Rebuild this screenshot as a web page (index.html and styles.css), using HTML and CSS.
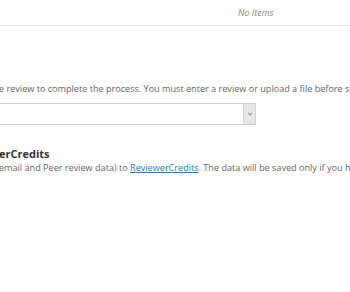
FILE: index.html
```html
<!DOCTYPE html>
<html>
<head>
<meta charset="utf-8">
<link rel="stylesheet" href="styles.css">
</head>
<body>
<div class="topbar">
  <span class="noitems">No Items</span>
</div>
<div class="content">
  <p class="instr">e review to complete the process. You must enter a review or upload a file before submitting.</p>
  <div class="select">
    <div class="select-field"></div>
    <div class="select-btn">
      <svg width="6" height="4" viewBox="0 0 6 4"><path d="M1 1 L3 3 L5 1" fill="none" stroke="#999" stroke-width="1.1"/></svg>
    </div>
  </div>
  <h3 class="heading">erCredits</h3>
  <p class="desc">email and Peer review data) to <a href="#" class="link">ReviewerCredits</a>. The data will be saved only if you have given consent.</p>
</div>
</body>
</html>
```

FILE: styles.css
```css
html, body {
  margin: 0;
  padding: 0;
  background: #fff;
  width: 350px;
  height: 292px;
  overflow: hidden;
}
body {
  font-family: "Open Sans", "Noto Sans", sans-serif;
  color: #666;
  font-size: 9.1px;
}
.topbar {
  height: 25px;
  border-bottom: 1px solid #e3e3e3;
  display: flex;
  align-items: center;
  padding-left: 238px;
}
.noitems {
  font-style: italic;
  color: #8a8a8a;
  font-size: 9px;
  white-space: nowrap;
}
.content {
  margin-left: -1px;
  white-space: nowrap;
  overflow: hidden;
}
.instr {
  margin: 56px 0 0 0;
  line-height: 14px;
}
.select {
  margin-top: 7px;
  margin-left: -20px;
  width: 277px;
  height: 22px;
  display: flex;
  border: 1px solid #d0d0d0;
  box-sizing: border-box;
}
.select-field {
  flex: 1;
}
.select-btn {
  width: 11px;
  background: #e6e6e6;
  border-left: 1px solid #d5d5d5;
  display: flex;
  align-items: center;
  justify-content: center;
}
.heading {
  margin: 21px 0 0 0;
  font-size: 11px;
  font-weight: 700;
  color: #333;
  line-height: 15px;
}
.desc {
  margin: 0;
  line-height: 14px;
}
.link {
  color: #2a7ab8;
  text-decoration: underline;
}
```
